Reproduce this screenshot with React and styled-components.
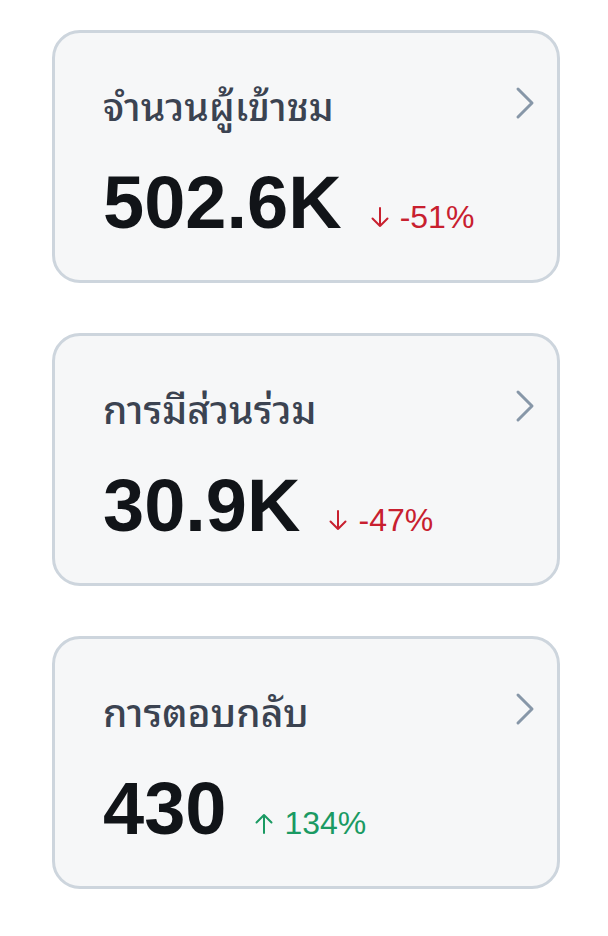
import React from "react"
import styled, { createGlobalStyle } from "styled-components"

const GlobalStyle = createGlobalStyle`
body {
  margin: 0;
  background: #ffffff;
  font-family: "Liberation Sans", "Noto Sans Thai", "Noto Sans", sans-serif;
}
`

const stats = [
    { label: "จำนวนผู้เข้าชม", value: "502.6K", change: "-51%", up: false },
    { label: "การมีส่วนร่วม", value: "30.9K", change: "-47%", up: false },
    { label: "การตอบกลับ", value: "430", change: "134%", up: true },
]

function Chevron() {
    return (
        <svg width="22" height="34" viewBox="0 0 22 34" fill="none">
            <path d="M5 3 L19 17 L5 31" stroke="#8797a8" strokeWidth="3" strokeLinecap="round" strokeLinejoin="round" />
        </svg>
    )
}

function Arrow({ up }) {
    return (
        <svg width="20" height="21" viewBox="0 0 20 21" fill="none">
            {up
                ? <path d="M10 20 V2 M2.5 9.5 L10 2 L17.5 9.5" stroke="currentColor" strokeWidth="2" strokeLinecap="round" strokeLinejoin="round" />
                : <path d="M10 1 V19 M2.5 11.5 L10 19 L17.5 11.5" stroke="currentColor" strokeWidth="2" strokeLinecap="round" strokeLinejoin="round" />}
        </svg>
    )
}

function StatCard({ stat }) {
    return (
        <Card>
            <Header>
                <Title>{stat.label}</Title>
                <Chevron />
            </Header>
            <ValueRow>
                <Value>{stat.value}</Value>
                <Change $up={stat.up}>
                    <Arrow up={stat.up} />
                    {stat.change}
                </Change>
            </ValueRow>
        </Card>
    )
}

export default function App() {
    return (
        <Page>
            <GlobalStyle />
            {stats.map(stat => <StatCard key={stat.label} stat={stat} />)}
        </Page>
    )
}

const Page = styled.div`
display: flex;
flex-direction: column;
gap: 50px;
padding: 30px 48px 0 52px;
`

const Card = styled.div`
box-sizing: border-box;
width: 508px;
height: 253px;
background: #f6f7f8;
border: 3px solid #cdd5dd;
border-radius: 28px;
padding: 50px 22px 0 48px;
display: flex;
flex-direction: column;
`

const Header = styled.div`
display: flex;
justify-content: space-between;
align-items: center;
height: 40px;
`

const Title = styled.div`
font-family: "Noto Sans Thai Looped", "Noto Sans Thai", "Noto Sans", sans-serif;
font-size: 39px;
font-weight: 500;
line-height: 40px;
color: #3b4351;
transform: translateY(1px);
`

const ValueRow = styled.div`
display: flex;
align-items: baseline;
gap: 28px;
margin-top: 43px;
`

const Value = styled.div`
font-family: "Liberation Sans", Arial, sans-serif;
font-size: 74px;
font-weight: 700;
line-height: 1;
color: #111418;
`

const Change = styled.div`
display: flex;
align-items: baseline;
gap: 10px;
font-family: "Liberation Sans", Arial, sans-serif;
font-size: 32px;
color: ${p => p.$up ? "#1a9a63" : "#c8202f"};
`
